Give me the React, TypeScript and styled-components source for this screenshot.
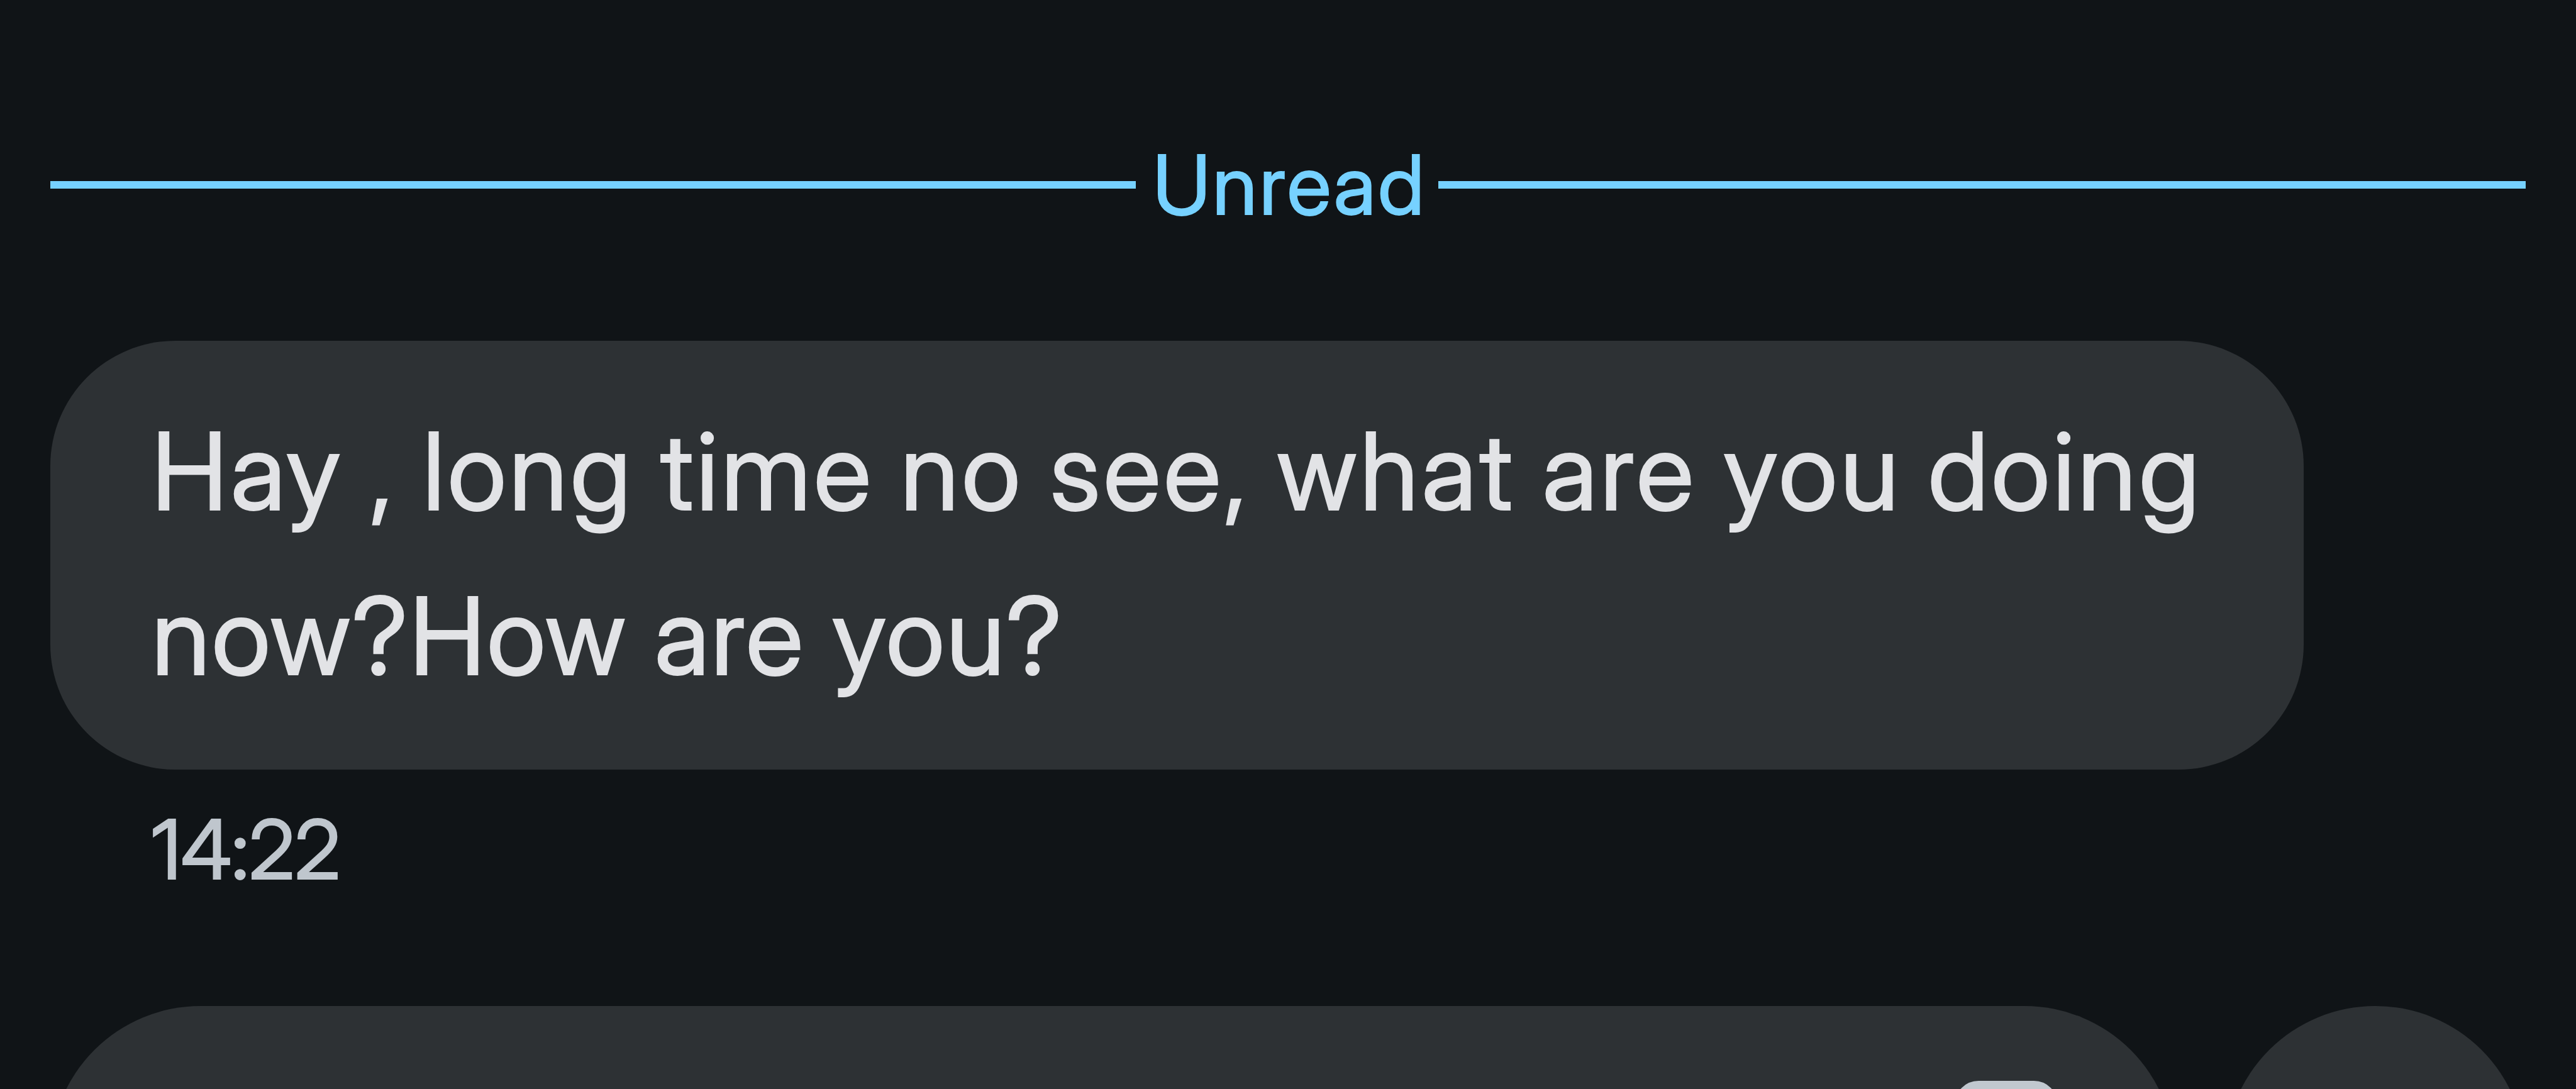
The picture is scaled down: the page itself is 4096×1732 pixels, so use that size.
import React from "react";
import styled, { createGlobalStyle } from "styled-components";

const App = () => {
    return(
        <Screen>
            <GlobalStyle />
            <UnreadDivider>
                <DividerLine $width="1726px" />
                <DividerLabel>Unread</DividerLabel>
                <DividerLine $width="1729px" />
            </UnreadDivider>
            <Bubble>
                <MessageLine $spacing="4.3px" $wordGap="-4.8px">Hay , long time no see, what are you doing</MessageLine>
                <MessageLine $spacing="2.2px" $wordGap="-2px">now?How are you?</MessageLine>
            </Bubble>
            <Time>14:22</Time>
            <Composer>
                <InputBox>
                    <GalleryIcon />
                </InputBox>
                <RoundButton />
            </Composer>
        </Screen>
    )
}
export default App

const GlobalStyle = createGlobalStyle`
    html, body {
        margin : 0;
        background : #101417;
        overflow : hidden;
    }
`

const Screen = styled.div`
    display : flex;
    flex-direction : column;
    box-sizing : border-box;
    width : 4096px;
    height : 1732px;
    padding : 194px 80px 0;
    overflow : hidden;
    background : #101417;
    font-family : "Inter Display", Inter, "Liberation Sans", sans-serif;
    -webkit-text-stroke : 1.8px currentColor;
`

const UnreadDivider = styled.div`
    display : flex;
    align-items : center;
    justify-content : space-between;
    flex-shrink : 0;
    height : 200px;
`

const DividerLine = styled.div<{ $width: string }>`
    width : ${({ $width }) => $width};
    height : 12px;
    background : #76d1ff;
`

const DividerLabel = styled.div`
    display : flex;
    justify-content : center;
    box-sizing : border-box;
    width : 481px;
    padding-left : 8px;
    font-size : 130.4px;
    line-height : 200px;
    letter-spacing : 3.3px;
    white-space : pre;
    color : #76d1ff;
`

const Bubble = styled.div`
    display : flex;
    flex-direction : column;
    flex-shrink : 0;
    box-sizing : border-box;
    width : 3583px;
    height : 682px;
    margin-top : 148px;
    padding : 76px 0 0 161px;
    border-radius : 199px;
    background : #2d3134;
`

const MessageLine = styled.div<{ $spacing: string; $wordGap: string }>`
    height : 262px;
    font-size : 170.5px;
    line-height : 262px;
    letter-spacing : ${({ $spacing }) => $spacing};
    word-spacing : ${({ $wordGap }) => $wordGap};
    white-space : pre;
    color : #e2e3e6;
`

const Time = styled.div`
    flex-shrink : 0;
    height : 200px;
    margin-top : 27px;
    padding-left : 161px;
    font-size : 130.4px;
    line-height : 200px;
    letter-spacing : -0.6px;
    color : #bfc6cd;
`

const Composer = styled.div`
    display : flex;
    flex-shrink : 0;
    gap : 80px;
    margin-top : 149px;
`

const InputBox = styled.div`
    display : flex;
    justify-content : flex-end;
    box-sizing : border-box;
    width : 3378px;
    height : 478px;
    padding : 119px 186px 0 0;
    border-radius : 239px;
    background : #2d3134;
`

const GalleryIcon = styled.div`
    box-sizing : border-box;
    width : 164px;
    height : 180px;
    border : 20px solid #c1c8cf;
    border-radius : 38px;
`

const RoundButton = styled.div`
    width : 478px;
    height : 478px;
    border-radius : 50%;
    background : #2d3134;
`
